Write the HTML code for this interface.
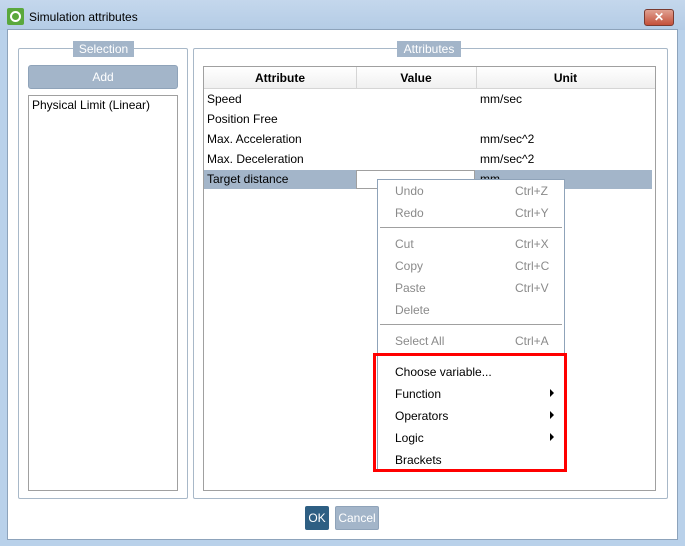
<!DOCTYPE html>
<html><head><style>
*{margin:0;padding:0;box-sizing:border-box}
body{width:685px;height:546px;overflow:hidden;font-family:"Liberation Sans",sans-serif;font-size:12px;color:#000;background:#b9d1ea;position:relative}
.a{position:absolute}
.t{position:absolute;white-space:nowrap;font-size:12px;line-height:14px}
.g{color:#8a8a8a}
</style></head><body>
<div class="a" style="left:0;top:0;width:685px;height:30px;background:linear-gradient(#c4d7ec,#b4cce6)"></div>
<div class="a" style="left:7px;top:8px;width:17px;height:17px;background:#5aa83c;border-radius:2px"></div>
<div class="a" style="left:10px;top:11px;width:11px;height:11px;border:2px solid #fff;border-radius:50%"></div>
<div class="t" style="left:29px;top:10px">Simulation attributes</div>
<div class="a" style="left:644px;top:9px;width:30px;height:17px;background:linear-gradient(#e0a192,#c4503a);border:1px solid #7a3a30;border-radius:3px;color:#fff;font-weight:bold;text-align:center;line-height:14px;font-size:12px">✕</div>
<div class="a" style="left:7px;top:29px;width:671px;height:511px;background:#fff;border:1px solid #8da3bb"></div>

<div class="a" style="left:18px;top:48px;width:170px;height:451px;border:1px solid #a8b8c8;border-radius:2px"></div>
<div class="a" style="left:73px;top:41px;width:61px;height:16px;background:#a3b5c9;color:#fff;text-align:center;line-height:16px">Selection</div>
<div class="a" style="left:28px;top:65px;width:150px;height:24px;background:#a3b5c9;border:1px solid #8fa3b9;border-radius:3px;color:#fff;text-align:center;line-height:22px">Add</div>
<div class="a" style="left:28px;top:95px;width:150px;height:396px;border:1px solid #a0a0a0"></div>
<div class="t" style="left:32px;top:98px">Physical Limit (Linear)</div>

<div class="a" style="left:193px;top:48px;width:475px;height:451px;border:1px solid #a8b8c8;border-radius:2px"></div>
<div class="a" style="left:397px;top:41px;width:64px;height:16px;background:#a3b5c9;color:#fff;text-align:center;line-height:16px">Attributes</div>
<div class="a" style="left:203px;top:66px;width:453px;height:425px;border:1px solid #a0a0a0"></div>
<div class="a" style="left:204px;top:67px;width:451px;height:22px;background:linear-gradient(#fff,#f0f0f0);border-bottom:1px solid #d5d5d5"></div>
<div class="a" style="left:356px;top:67px;width:1px;height:22px;background:#d5d5d5"></div>
<div class="a" style="left:476px;top:67px;width:1px;height:22px;background:#d5d5d5"></div>
<div class="t" style="left:204px;top:71px;width:152px;text-align:center;font-weight:bold">Attribute</div>
<div class="t" style="left:356px;top:71px;width:120px;text-align:center;font-weight:bold">Value</div>
<div class="t" style="left:476px;top:71px;width:179px;text-align:center;font-weight:bold">Unit</div>
<div class="t" style="left:207px;top:92px">Speed</div><div class="t" style="left:480px;top:92px">mm/sec</div>
<div class="t" style="left:207px;top:112px">Position Free</div>
<div class="t" style="left:207px;top:132px">Max. Acceleration</div><div class="t" style="left:480px;top:132px">mm/sec^2</div>
<div class="t" style="left:207px;top:152px">Max. Deceleration</div><div class="t" style="left:480px;top:152px">mm/sec^2</div>
<div class="a" style="left:204px;top:170px;width:448px;height:19px;background:#a3b5c9"></div>
<div class="t" style="left:207px;top:172px">Target distance</div>
<div class="t" style="left:480px;top:172px">mm</div>
<div class="a" style="left:356px;top:170px;width:119px;height:19px;background:#fff;border:1px solid #a0a0a0"></div>

<div class="a" style="left:377px;top:179px;width:188px;height:293px;background:#fff;border:1px solid #8fa3b9"></div>
<div class="t g" style="left:395px;top:184px">Undo</div><div class="t g" style="left:515px;top:184px">Ctrl+Z</div>
<div class="t g" style="left:395px;top:206px">Redo</div><div class="t g" style="left:515px;top:206px">Ctrl+Y</div>
<div class="a" style="left:380px;top:227px;width:182px;height:1px;background:#a0a0a0"></div>
<div class="t g" style="left:395px;top:237px">Cut</div><div class="t g" style="left:515px;top:237px">Ctrl+X</div>
<div class="t g" style="left:395px;top:259px">Copy</div><div class="t g" style="left:515px;top:259px">Ctrl+C</div>
<div class="t g" style="left:395px;top:281px">Paste</div><div class="t g" style="left:515px;top:281px">Ctrl+V</div>
<div class="t g" style="left:395px;top:303px">Delete</div>
<div class="a" style="left:380px;top:324px;width:182px;height:1px;background:#a0a0a0"></div>
<div class="t g" style="left:395px;top:334px">Select All</div><div class="t g" style="left:515px;top:334px">Ctrl+A</div>
<div class="a" style="left:373px;top:353px;width:194px;height:119px;border:3px solid #f00"></div>
<div class="t" style="left:395px;top:365px">Choose variable...</div>
<div class="t" style="left:395px;top:387px">Function</div>
<div class="t" style="left:395px;top:409px">Operators</div>
<div class="t" style="left:395px;top:431px">Logic</div>
<div class="t" style="left:395px;top:453px">Brackets</div>
<div class="a" style="left:550px;top:389px;border-left:4px solid #000;border-top:4px solid transparent;border-bottom:4px solid transparent"></div>
<div class="a" style="left:550px;top:411px;border-left:4px solid #000;border-top:4px solid transparent;border-bottom:4px solid transparent"></div>
<div class="a" style="left:550px;top:433px;border-left:4px solid #000;border-top:4px solid transparent;border-bottom:4px solid transparent"></div>

<div class="a" style="left:305px;top:506px;width:24px;height:24px;background:#2e5f83;border-radius:2px;color:#fff;text-align:center;line-height:24px">OK</div>
<div class="a" style="left:335px;top:506px;width:44px;height:24px;background:#a3b5c9;border:1px solid #8fa3b9;border-radius:2px;color:#fff;text-align:center;line-height:22px">Cancel</div>
</body></html>
